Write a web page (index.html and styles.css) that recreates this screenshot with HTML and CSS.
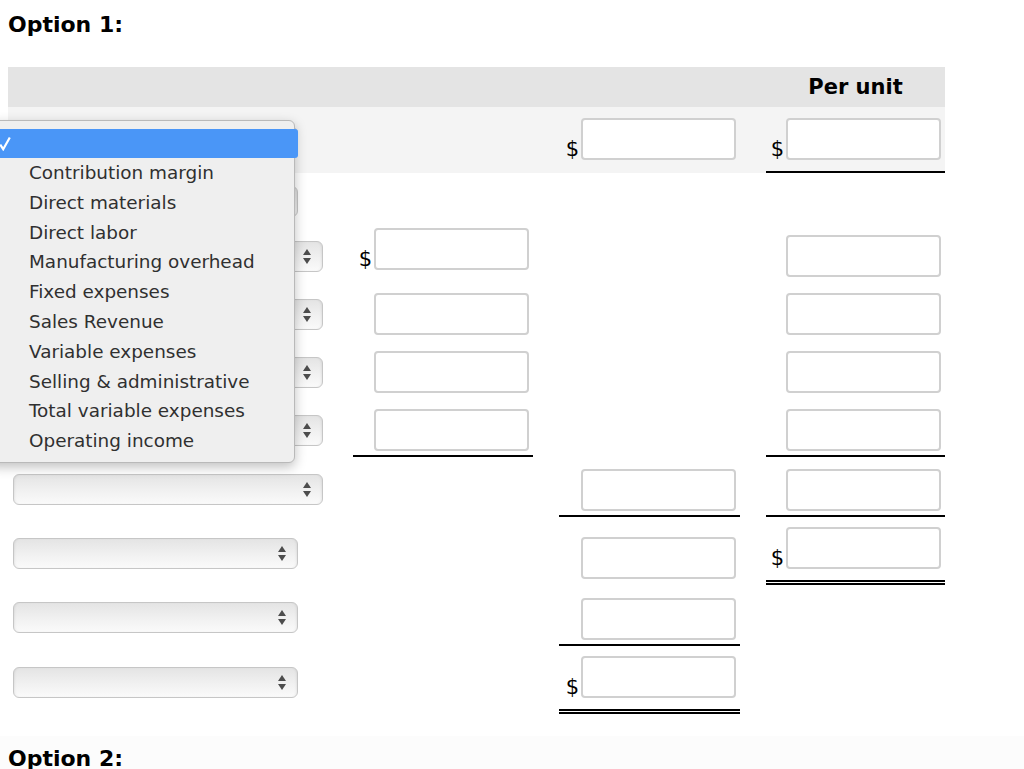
FILE: index.html
```html
<!DOCTYPE html>
<html>
<head>
    <meta charset="UTF-8">
    <title>Option 1</title>
    <link rel="stylesheet" href="styles.css">
</head>
<body>
    <div class="page">
        <h2 class="option-title">Option 1:</h2>

        <div class="sheet">
            <div class="row head">
                <div></div><div></div><div></div>
                <div class="col-title">Per unit</div>
            </div>

            <!-- row 1 : the open select -->
            <div class="row band h66">
                <div class="label"><div class="select"><svg class="arrows" viewBox="0 0 8 15"><polygon points="0,6 4,0 8,6"/><polygon points="0,9 8,9 4,15"/></svg></div></div>
                <div class="cell"></div>
                <div class="cell cash"><span class="cur">$</span><input class="amt" type="text"></div>
                <div class="cell cash line"><span class="cur">$</span><input class="amt" type="text"></div>
            </div>

            <div class="row h52">
                <div class="label"><div class="select"><svg class="arrows" viewBox="0 0 8 15"><polygon points="0,6 4,0 8,6"/><polygon points="0,9 8,9 4,15"/></svg></div></div>
                <div class="cell"></div><div class="cell"></div><div class="cell"></div>
            </div>

            <div class="row h58">
                <div class="label"><div class="select wide"><svg class="arrows" viewBox="0 0 8 15"><polygon points="0,6 4,0 8,6"/><polygon points="0,9 8,9 4,15"/></svg></div></div>
                <div class="cell cash"><span class="cur">$</span><input class="amt" type="text"></div>
                <div class="cell"></div>
                <div class="cell"><input class="amt" type="text"></div>
            </div>

            <div class="row h58">
                <div class="label"><div class="select wide"><svg class="arrows" viewBox="0 0 8 15"><polygon points="0,6 4,0 8,6"/><polygon points="0,9 8,9 4,15"/></svg></div></div>
                <div class="cell"><input class="amt" type="text"></div>
                <div class="cell"></div>
                <div class="cell"><input class="amt" type="text"></div>
            </div>

            <div class="row h58">
                <div class="label"><div class="select wide"><svg class="arrows" viewBox="0 0 8 15"><polygon points="0,6 4,0 8,6"/><polygon points="0,9 8,9 4,15"/></svg></div></div>
                <div class="cell"><input class="amt" type="text"></div>
                <div class="cell"></div>
                <div class="cell"><input class="amt" type="text"></div>
            </div>

            <div class="row h58">
                <div class="label"><div class="select wide"><svg class="arrows" viewBox="0 0 8 15"><polygon points="0,6 4,0 8,6"/><polygon points="0,9 8,9 4,15"/></svg></div></div>
                <div class="cell line"><input class="amt" type="text"></div>
                <div class="cell"></div>
                <div class="cell line"><input class="amt" type="text"></div>
            </div>

            <div class="row h60">
                <div class="label"><div class="select wide"><svg class="arrows" viewBox="0 0 8 15"><polygon points="0,6 4,0 8,6"/><polygon points="0,9 8,9 4,15"/></svg></div></div>
                <div class="cell"></div>
                <div class="cell line"><input class="amt" type="text"></div>
                <div class="cell line"><input class="amt" type="text"></div>
            </div>

            <div class="row h68">
                <div class="label"><div class="select"><svg class="arrows" viewBox="0 0 8 15"><polygon points="0,6 4,0 8,6"/><polygon points="0,9 8,9 4,15"/></svg></div></div>
                <div class="cell"></div>
                <div class="cell"><input class="amt" type="text"></div>
                <div class="cell cash double"><span class="cur">$</span><input class="amt" type="text"></div>
            </div>

            <div class="row h61">
                <div class="label"><div class="select"><svg class="arrows" viewBox="0 0 8 15"><polygon points="0,6 4,0 8,6"/><polygon points="0,9 8,9 4,15"/></svg></div></div>
                <div class="cell"></div>
                <div class="cell line"><input class="amt" type="text"></div>
                <div class="cell"></div>
            </div>

            <div class="row h68">
                <div class="label"><div class="select"><svg class="arrows" viewBox="0 0 8 15"><polygon points="0,6 4,0 8,6"/><polygon points="0,9 8,9 4,15"/></svg></div></div>
                <div class="cell"></div>
                <div class="cell cash double"><span class="cur">$</span><input class="amt" type="text"></div>
                <div class="cell"></div>
            </div>
        </div>

        <!-- open popup of the first select -->
        <ul class="menu">
            <li class="picked"><svg class="check" viewBox="0 0 12 15"><polyline points="1.2,8.5 4.2,13.2 10.8,1.5"/></svg></li>
            <li>Contribution margin</li>
            <li>Direct materials</li>
            <li>Direct labor</li>
            <li>Manufacturing overhead</li>
            <li>Fixed expenses</li>
            <li>Sales Revenue</li>
            <li>Variable expenses</li>
            <li>Selling &amp; administrative</li>
            <li>Total variable expenses</li>
            <li>Operating income</li>
        </ul>
    </div>

    <div class="next">
        <h2 class="option-title">Option 2:</h2>
    </div>
</body>
</html>
```

FILE: styles.css
```css
body {
    margin: 0;
    background: #fff;
    font-family: "DejaVu Sans", Verdana, sans-serif;
    color: #000;
    overflow: hidden;
}
.page {
    position: relative;
    padding: 12px 0 0 8px;
    height: 724px;
}
.option-title {
    margin: 0;
    font-size: 22px;
    line-height: 26px;
    font-weight: bold;
}
.sheet {
    margin-top: 29px;
    width: 937px;
}
.row {
    display: grid;
    grid-template-columns: 319px 180px 181px 179px;
    column-gap: 26px;
}
.head {
    height: 40px;
    background: #e4e4e4;
}
.col-title {
    font-size: 21px;
    font-weight: bold;
    line-height: 40px;
    text-align: center;
}
.band { background: #f4f4f4; }
.h52 { height: 52px; }
.h58 { height: 58px; }
.h60 { height: 60px; }
.h61 { height: 61px; }
.h66 { height: 66px; }
.h68 { height: 68px; }

.label {
    display: flex;
    align-items: center;
    padding: 4px 0 0 5px;
}
.select {
    position: relative;
    width: 285px;
    height: 31px;
    box-sizing: border-box;
    border: 1px solid #c6c6c6;
    border-radius: 6px;
    background: linear-gradient(#e4e4e4, #f1f1f1 55%, #fafafa);
    box-shadow: inset 2px 0 3px -2px rgba(0,0,0,0.12), inset -2px 0 3px -2px rgba(0,0,0,0.12);
}
.select.wide { width: 310px; }
.arrows {
    position: absolute;
    right: 11px;
    top: 7px;
    width: 8px;
    height: 15px;
    fill: #4d4d4d;
}

.cell {
    display: flex;
    align-items: flex-end;
    justify-content: flex-end;
    padding: 0 4px 4px 0;
    border-bottom: 2px solid transparent;
}
.cell.cash { padding-bottom: 11px; }
.cell.line { border-bottom-color: #000; }
.cell.double { border-bottom: 5px double #000; }
.cur {
    font-size: 21px;
    line-height: 1;
    margin-right: 2px;
}
.amt {
    width: 155px;
    height: 42px;
    box-sizing: border-box;
    border: 2px solid #d0d0d0;
    border-radius: 4px;
    background: #fff;
    margin: 0;
}

.menu {
    position: absolute;
    top: 120px;
    left: -12px;
    width: 307px;
    box-sizing: border-box;
    margin: 0;
    padding: 8px 0 6px;
    list-style: none;
    background: #efefef;
    border: 1px solid #b9b9b9;
    border-radius: 6px;
    box-shadow: 0 4px 12px rgba(0,0,0,0.25);
    font-size: 18.4px;
    color: #303030;
}
.menu li {
    height: 29.8px;
    line-height: 29.8px;
    padding-left: 40px;
}
.menu li.picked {
    position: relative;
    height: 29px;
    margin-right: -4px;
    background: #4a96f7;
    border-radius: 0 3px 3px 0;
}
.check {
    position: absolute;
    left: 10px;
    top: 7px;
    width: 12px;
    height: 15px;
    fill: none;
    stroke: #fff;
    stroke-width: 2.2;
}

.next {
    background: #fcfcfc;
    padding: 10px 0 0 8px;
    height: 40px;
}
```
